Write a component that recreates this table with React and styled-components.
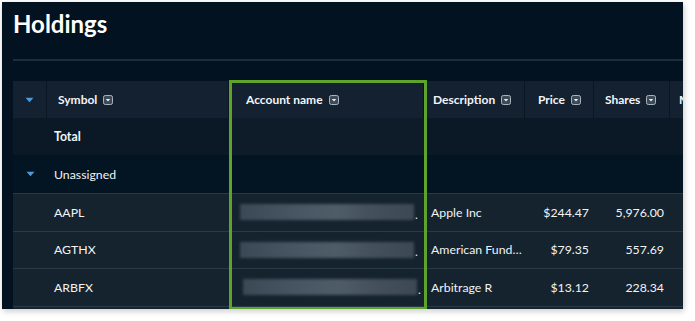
import React from "react";
import styled, { createGlobalStyle } from "styled-components";

const Global = createGlobalStyle`
  html, body { margin: 0; padding: 0; background: #ffffff; }
  body { font-family: Lato, "Noto Sans", sans-serif; }
`;

const Page = styled.div`
  padding: 2px 0 0 2px;
  width: 695px;
  height: 321px;
  box-sizing: border-box;
`;

const Panel = styled.div`
  position: relative;
  width: 681px;
  height: 307px;
  background: #021220;
  overflow: hidden;
  box-shadow: 1px 2px 6px rgba(0, 0, 0, 0.22);
  padding-left: 11px;
  box-sizing: border-box;
`;

const Title = styled.h1`
  margin: 0;
  padding-top: 7px;
  height: 40px;
  font-family: Lato, sans-serif;
  font-weight: 700;
  font-size: 24px;
  line-height: 30px;
  color: #ffffff;
`;

const Rule = styled.div`
  height: 2px;
  background: #1f2d3a;
  margin-top: 10px;
  margin-bottom: 20px;
`;

const COLS = "34px 182px 195px 101px 69px 76px 200px";

const Row = styled.div`
  display: grid;
  grid-template-columns: ${COLS};
  height: ${(p) => p.$h}px;
  background: ${(p) => p.$bg};
  border-top: ${(p) => (p.$line ? "1px solid #2a3948" : "none")};
  box-sizing: border-box;
  width: 1000px;
`;

const HeadCell = styled.div`
  display: flex;
  align-items: center;
  justify-content: ${(p) => (p.$center ? "center" : "flex-start")};
  padding-left: ${(p) => p.$pl || 0}px;
  background: #132130;
  border-right: 1px solid #0a1621;
  font-weight: 700;
  font-size: 12px;
  color: #f3f5f7;
  gap: 6px;
  white-space: nowrap;
`;

const Cell = styled.div`
  display: flex;
  align-items: center;
  justify-content: ${(p) => (p.$right ? "flex-end" : p.$center ? "center" : "flex-start")};
  padding-left: ${(p) => p.$pl || 0}px;
  padding-right: ${(p) => p.$pr || 0}px;
  font-weight: ${(p) => (p.$bold ? 700 : 400)};
  font-size: 12.3px;
  color: #f1f3f5;
  white-space: nowrap;
  background: ${(p) => p.$bg || "transparent"};
`;

const Blur = styled.div`
  width: 174px;
  height: 16px;
  margin-left: ${(p) => p.$ml}px;
  background: linear-gradient(90deg, #3e4c59 0%, #4a5866 30%, #52606c 55%, #47545f 75%, #3f4c58 100%);
  filter: blur(1.5px);
  opacity: 0.95;
`;

const Dot = styled.span`
  margin-left: 1px;
  font-size: 12px;
  color: #e8ecef;
  align-self: center;
  padding-top: 4px;
`;

const Highlight = styled.div`
  position: absolute;
  left: 227px;
  top: 78px;
  width: 198px;
  height: 230px;
  border: 3px solid #5fa42a;
  box-sizing: border-box;
  pointer-events: none;
`;

const Caret = () => (
  <svg width={9} height={6} viewBox="0 0 9 6">
    <path d="M0.5 0.8 H8.5 L4.5 5.2 Z" fill="#4f9ad8" />
  </svg>
);

const FilterIcon = () => (
  <svg width="10" height="10" viewBox="0 0 10 10">
    <rect x="0.5" y="0.5" width="9" height="9" rx="1.8" fill="#3d4a57" stroke="#a9b4be" strokeWidth="1" />
    <path d="M2.8 4 H7.2 L5 6.6 Z" fill="#eef1f3" />
  </svg>
);

const headers = [
  { label: "Symbol", pl: 11 },
  { label: "Account name", pl: 17 },
  { label: "Description", pl: 9 },
  { label: "Price", pl: 13 },
  { label: "Shares", pl: 11 },
  { label: "Market value", pl: 9 },
];

const rows = [
  { sym: "AAPL", ml: 11, desc: "Apple Inc", price: "$244.47", shares: "5,976.00" },
  { sym: "AGTHX", ml: 11, desc: "American Fund…", price: "$79.35", shares: "557.69" },
  { sym: "ARBFX", ml: 14, desc: "Arbitrage R", price: "$13.12", shares: "228.34" },
];

export default function App() {
  return (
    <>
      <Global />
      <Page>
        <Panel>
          <Title>Holdings</Title>
          <Rule />
          <Row $h={37} $bg="#132130">
            <HeadCell $center>
              <Caret />
            </HeadCell>
            {headers.map((h) => (
              <HeadCell key={h.label} $pl={h.pl}>
                {h.label}
                <FilterIcon />
              </HeadCell>
            ))}
          </Row>
          <Row $h={37} $bg="#0b1926">
            <Cell />
            <Cell $bold $pl={7}>Total</Cell>
            <Cell $bg="#0e1c29" />
          </Row>
          <Row $h={38} $bg="#031422">
            <Cell $center>
              <Caret />
            </Cell>
            <Cell $pl={7}>Unassigned</Cell>
          </Row>
          {rows.map((r) => (
            <Row key={r.sym} $h={37.5} $bg="#15232f" $line>
              <Cell />
              <Cell $pl={7}>{r.sym}</Cell>
              <Cell>
                <Blur $ml={r.ml} />
                <Dot>.</Dot>
              </Cell>
              <Cell $pl={7}>{r.desc}</Cell>
              <Cell $right $pr={5}>{r.price}</Cell>
              <Cell $right $pr={6}>{r.shares}</Cell>
              <Cell />
            </Row>
          ))}
          <Row $h={37.5} $bg="#15232f" $line />
          <Highlight />
        </Panel>
      </Page>
    </>
  );
}
